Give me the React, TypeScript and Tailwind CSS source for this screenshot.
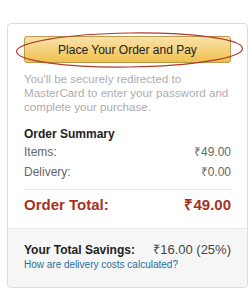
import React from 'react'

export default function App() {
    return (
        <div className="w-[252px] h-[300px] bg-white pt-[23px] pl-[7px]" style={{ fontFamily: '"Liberation Sans", Arial, sans-serif' }}>
            <div className="relative w-[241px] h-[265px] border border-[#dcdcdc] rounded-[4px] flex flex-col">
                <div className="px-4 pt-[12px]">
                    <button className="w-full h-[27px] rounded-[3px] border border-[#b89c4b] bg-gradient-to-b from-[#f9e2a8] to-[#f0c14b] text-[12px] text-[#222] leading-none">
                        Place Your Order and Pay
                    </button>
                    <p className="mt-[9px] text-[11.6px] leading-[14px] text-[#adadad]">
                        You'll be securely redirected to MasterCard to enter your password and complete your purchase.
                    </p>
                    <h3 className="mt-[12px] text-[12px] font-bold text-[#222] leading-[16px]">Order Summary</h3>
                    <div className="flex justify-between text-[12px] text-[#666] leading-[20px]">
                        <span>Items:</span>
                        <span>₹49.00</span>
                    </div>
                    <div className="flex justify-between text-[12px] text-[#666] leading-[20px]">
                        <span>Delivery:</span>
                        <span>₹0.00</span>
                    </div>
                    <div className="mt-[7px] border-t border-[#e4e4e4]" />
                    <div className="mt-[5px] flex justify-between text-[15px] font-bold text-[#a8321f] leading-[20px]">
                        <span>Order Total:</span>
                        <span>₹49.00</span>
                    </div>
                </div>
                <div className="mt-auto h-[59px] bg-[#f6f6f6] border-t border-[#e6e6e6] rounded-b-[4px] px-4 pt-[13px]">
                    <div className="flex justify-between text-[12px] leading-[16px] text-[#222]">
                        <span className="font-bold">Your Total Savings:</span>
                        <span className="text-[13px] text-[#444]">₹16.00 (25%)</span>
                    </div>
                    <div className="text-[10px] leading-[13px] text-[#1f6f9f]">How are delivery costs calculated?</div>
                </div>
                <svg className="absolute left-[7px] top-[7px] pointer-events-none" width="229" height="38" viewBox="0 0 229 38">
                    <ellipse cx="114.5" cy="19" rx="113" ry="17" fill="none" stroke="#b03a2e" strokeWidth="1.2" transform="rotate(-0.8 114.5 19)" />
                </svg>
            </div>
        </div>
    )
}
